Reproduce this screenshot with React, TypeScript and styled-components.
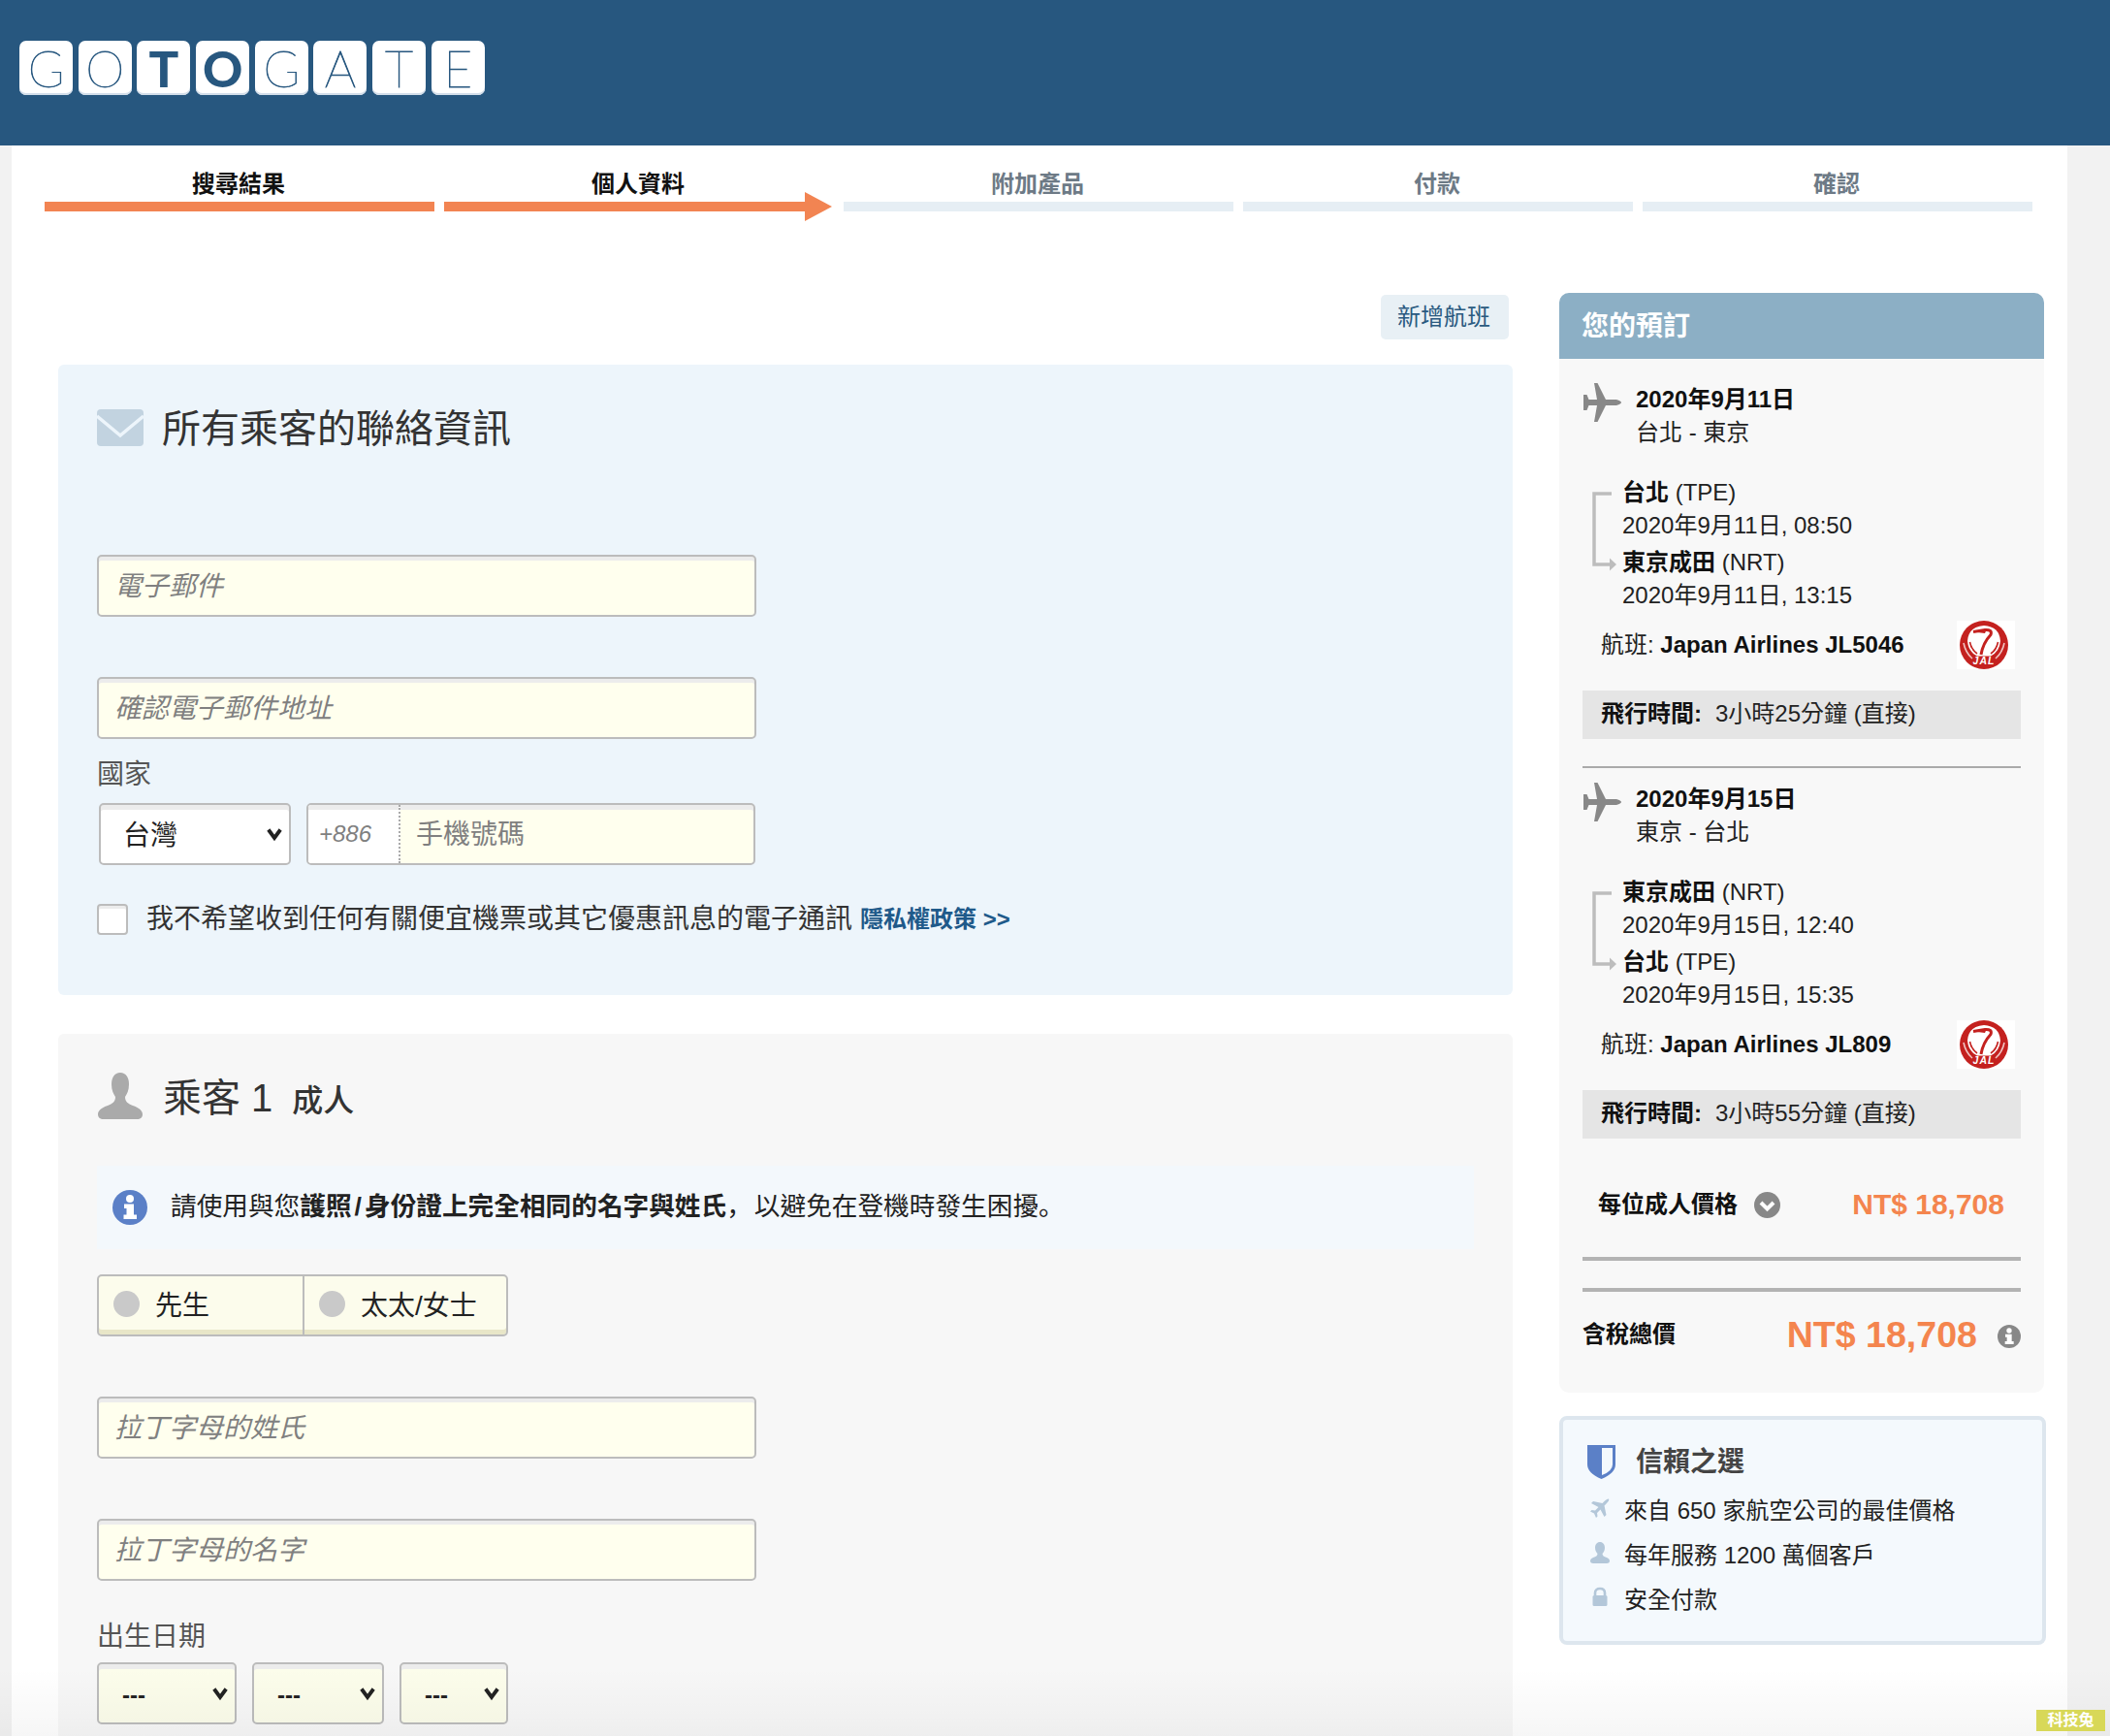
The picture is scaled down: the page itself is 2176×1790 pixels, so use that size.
import React from "react";
import styled, { createGlobalStyle } from "styled-components";

const Global = createGlobalStyle`
  html, body {
    margin: 0;
    padding: 0;
    background: #f2f2f2;
  }
  * {
    box-sizing: border-box;
  }
  body {
    font-family: "Liberation Sans", "Noto Sans CJK TC", sans-serif;
    color: #333;
  }
`;

const Page = styled.div`
  position: relative;
  width: 2176px;
  height: 1790px;
  overflow: hidden;
  background: #f2f2f2;
`;

const Header = styled.header`
  height: 150px;
  padding: 42px 0 0 20px;
  background: #27577f;
`;

const Logo = styled.div`
  display: flex;
  gap: 5.7px;
`;

const Tile = styled.span<{ $bold?: boolean }>`
  display: flex;
  align-items: center;
  justify-content: center;
  width: 55px;
  height: 56px;
  border-radius: 7px;
  background: #fff;
  box-shadow: inset 0 -2px 0 #d3deea;
  color: #27577f;
  font-family: Lato, sans-serif;
  font-size: 51px;
  line-height: 1;
  font-weight: ${(p) => (p.$bold ? 900 : 100)};
  -webkit-text-stroke: ${(p) => (p.$bold ? "0" : "0.8px #27577f")};
`;

const Sheet = styled.div`
  width: 2120px;
  height: 1640px;
  margin-left: 12px;
  background: #fff;
`;

const Steps = styled.nav`
  display: flex;
  gap: 10px;
  padding: 25px 0 0 34px;
`;

const Step = styled.div`
  display: flex;
  flex-direction: column;
  width: 402px;
`;

const StepLabel = styled.div<{ $done?: boolean }>`
  margin-bottom: 3px;
  padding-right: 2px;
  text-align: center;
  font-size: 24px;
  line-height: 30px;
  font-weight: 700;
  color: ${(p) => (p.$done ? "#111" : "#6d7a86")};
`;

const StepBar = styled.div<{ $done?: boolean; $current?: boolean }>`
  position: relative;
  width: ${(p) => (p.$current ? "372px" : "100%")};
  height: 10px;
  background: ${(p) => (p.$done ? "#f28452" : "#e6eef4")};
  ${(p) =>
    p.$current &&
    `
    &::after {
      content: "";
      position: absolute;
      left: 100%;
      top: -10px;
      border-left: 28px solid #f28452;
      border-top: 15px solid transparent;
      border-bottom: 15px solid transparent;
    }
  `}
`;

const Columns = styled.div`
  display: flex;
  gap: 48px;
  padding: 84px 0 0 48px;
`;

const Main = styled.main`
  width: 1500px;
  padding-top: 2px;
`;

const FlightBar = styled.div`
  display: flex;
  justify-content: flex-end;
  padding-right: 4px;
  margin-bottom: 26px;
`;

const AddFlight = styled.button`
  width: 132px;
  height: 46px;
  padding: 0 2px 6px 0;
  border: 0;
  border-radius: 5px;
  background: #e8f0f5;
  color: #2a5a80;
  font-family: inherit;
  font-size: 24px;
`;

const Panel = styled.section<{ $tint: string }>`
  padding: 45px 0 62px 40px;
  border-radius: 6px;
  background: ${(p) => p.$tint};
  & + & {
    margin-top: 40px;
    padding-top: 40px;
  }
`;

const TitleRow = styled.div`
  display: flex;
  align-items: center;
  gap: 19px;
  height: 40px;
`;

const Title = styled.h2`
  margin: 0;
  padding-top: 2px;
  font-size: 40px;
  line-height: 48px;
  font-weight: 400;
  color: #333;
`;

const Passenger = styled.div`
  display: flex;
  align-items: center;
  gap: 21px;
  height: 48px;
  padding-left: 1px;
`;

const PassengerTitle = styled(Title)`
  padding-top: 6px;
`;

const PassengerType = styled.span`
  margin-left: 20px;
  font-size: 32px;
  font-weight: 500;
`;

const Field = styled.input<{ $top?: number }>`
  display: block;
  width: 680px;
  height: 64px;
  margin-top: ${(p) => p.$top ?? 62}px;
  padding: 2px 16px 0;
  border: 2px solid #bcbcbc;
  border-radius: 5px;
  outline: 0;
  background: #ffffee;
  box-shadow: inset 0 4px 0 #ececec;
  font-family: inherit;
  font-size: 28px;
  &::placeholder {
    color: #808080;
    font-style: italic;
    opacity: 1;
  }
`;

const FieldLabel = styled.label<{ $top: number }>`
  display: block;
  margin-top: ${(p) => p.$top}px;
  font-size: 28px;
  line-height: 36px;
  color: #555;
`;

const PhoneRow = styled.div`
  display: flex;
  gap: 16px;
  margin: 11px 0 0 2px;
`;

const SelectWrap = styled.div<{ $width: number }>`
  position: relative;
  width: ${(p) => p.$width}px;
  height: 64px;
`;

const Select = styled.select<{ $tint?: string }>`
  width: 100%;
  height: 100%;
  padding: 2px 0 0 ${(p) => (p.$tint ? 24 : 23)}px;
  border: 2px solid #bcbcbc;
  border-radius: 5px;
  outline: 0;
  appearance: none;
  background: ${(p) => p.$tint ?? "#fff"};
  box-shadow: inset 0 5px 0 #ececec;
  color: #222;
  font-family: inherit;
  font-size: ${(p) => (p.$tint ? 24 : 28)}px;
  font-weight: ${(p) => (p.$tint ? 700 : 400)};
`;

const Caret = styled.svg`
  position: absolute;
  right: 8px;
  top: 23px;
  width: 18px;
  height: 18px;
  pointer-events: none;
`;

const Phone = styled.div`
  display: flex;
  width: 463px;
  height: 64px;
  border: 2px solid #bcbcbc;
  border-radius: 5px;
  overflow: hidden;
  background: #ffffee;
  box-shadow: inset 0 5px 0 #ececec;
`;

const Prefix = styled.span`
  display: flex;
  align-items: center;
  width: 95px;
  padding-left: 11px;
  border-right: 2px dotted #aaa;
  background: #fff;
  box-shadow: inset 0 5px 0 #ececec;
  color: #808080;
  font-size: 24px;
  font-style: italic;
`;

const PhoneInput = styled.input`
  flex: 1;
  min-width: 0;
  padding: 2px 16px 0;
  border: 0;
  outline: 0;
  background: transparent;
  font-family: inherit;
  font-size: 28px;
  &::placeholder {
    color: #808080;
    opacity: 1;
  }
`;

const OptOut = styled.div`
  display: flex;
  align-items: center;
  height: 32px;
  margin-top: 40px;
  font-size: 28px;
  line-height: 32px;
  color: #333;
`;

const CheckBox = styled.span`
  width: 32px;
  height: 32px;
  margin-right: 19px;
  border: 2px solid #bcbcbc;
  border-radius: 4px;
  background: #fff;
  box-shadow: inset 0 3px 0 #ececec;
`;

const Policy = styled.a`
  margin-left: 8px;
  color: #1f5a8a;
  font-size: 24px;
  font-weight: 700;
`;

const Notice = styled.div`
  display: flex;
  align-items: center;
  gap: 24px;
  width: 1420px;
  height: 86px;
  margin-top: 48px;
  padding-left: 16px;
  background: #f3f8fc;
  font-size: 26.67px;
  color: #222;
  b {
    font-weight: 700;
  }
`;

const NoticeText = styled.span`
  padding-bottom: 8px;
`;

const Slash = styled.span`
  padding: 0 3px;
`;

const Punct = styled.span`
  padding-right: 2px;
  font-family: "Noto Sans CJK SC", sans-serif;
`;

const RadioGroup = styled.div`
  display: flex;
  width: 424px;
  height: 64px;
  margin-top: 26px;
  border: 2px solid #bcbcbc;
  border-radius: 5px;
  overflow: hidden;
  background: #fcfcec;
  box-shadow: inset 0 -5px 0 #e8e6c8;
`;

const RadioOption = styled.label<{ $width: number }>`
  display: flex;
  align-items: center;
  gap: 16px;
  width: ${(p) => p.$width}px;
  padding: 0 0 4px 15px;
  font-size: 28px;
  color: #222;
  & + & {
    border-left: 2px solid #bcbcbc;
  }
`;

const RadioDot = styled.span`
  width: 27px;
  height: 27px;
  border-radius: 50%;
  background: #c9c9c9;
`;

const DateRow = styled.div`
  display: flex;
  gap: 16px;
  margin-top: 8px;
`;

const Aside = styled.aside`
  width: 502px;
`;

const Booking = styled.div`
  width: 500px;
  height: 1134px;
  border-radius: 10px;
  overflow: hidden;
  background: #f8f8f8;
`;

const BookingHead = styled.h3`
  height: 68px;
  margin: 0;
  padding-left: 23px;
  background: #8cafc5;
  color: #fff;
  font-size: 28px;
  line-height: 70px;
  font-weight: 700;
`;

const BookingBody = styled.div`
  padding: 10px 24px 0;
  font-size: 24px;
  line-height: 34px;
  color: #222;
  b {
    font-weight: 700;
    color: #111;
  }
`;

const LegHead = styled.div`
  display: flex;
  gap: 15px;
  margin: 15px 0 0 1px;
`;

const Stops = styled.div`
  position: relative;
  margin-top: 28px;
  padding-left: 41px;
`;

const StopName = styled.div`
  & ~ & {
    margin-top: 4px;
  }
`;

const Bracket = styled.svg`
  position: absolute;
  left: 9px;
  top: 16px;
  width: 28px;
  height: 84px;
`;

const FlightRow = styled.div`
  display: flex;
  align-items: center;
  justify-content: space-between;
  height: 50px;
  margin-top: 9px;
  padding: 0 6px 0 19px;
`;

const Duration = styled.div`
  display: flex;
  align-items: center;
  gap: 14px;
  height: 50px;
  margin-top: 22px;
  padding: 0 0 2px 19px;
  background: #e5e5e5;
`;

const LegRule = styled.hr`
  height: 2px;
  margin: 28px 0 0;
  border: 0;
  background: #aaa;
`;

const PriceRow = styled.div`
  display: flex;
  align-items: center;
  height: 40px;
  margin-top: 48px;
  padding: 0 17px 0 16px;
`;

const PriceLabel = styled.b`
  margin-right: 17px;
`;

const Amount = styled.span<{ $large?: boolean }>`
  margin-left: auto;
  color: #f4854e;
  font-size: ${(p) => (p.$large ? 37.6 : 30)}px;
  font-weight: 700;
`;

const Rule = styled.hr<{ $top: number }>`
  height: 4px;
  margin: ${(p) => p.$top}px 0 0;
  border: 0;
  background: #b3b3b3;
`;

const TotalRow = styled.div`
  display: flex;
  align-items: center;
  gap: 21px;
  height: 50px;
  margin-top: 19px;
  svg {
    margin-top: 4px;
  }
`;

const Trust = styled.div`
  height: 236px;
  margin-top: 24px;
  padding: 26px 0 0 25px;
  border: 4px solid #dde6ee;
  border-radius: 8px;
  background: #f4f9fd;
`;

const TrustHead = styled.div`
  display: flex;
  align-items: center;
  gap: 21px;
  height: 35px;
  margin-bottom: 7px;
`;

const TrustTitle = styled.div`
  padding-bottom: 5px;
  font-size: 28px;
  font-weight: 700;
  color: #444;
`;

const TrustRow = styled.div`
  display: flex;
  align-items: center;
  height: 46px;
  padding-left: 3px;
  font-size: 24px;
  color: #222;
`;

const TrustIcon = styled.svg`
  flex: none;
  width: 20px;
  height: 22px;
  margin-right: 15px;
`;

const Shade = styled.div`
  position: absolute;
  left: 0;
  right: 0;
  bottom: 0;
  height: 70px;
  background: linear-gradient(rgba(0, 0, 0, 0), rgba(0, 0, 0, 0.035));
  pointer-events: none;
`;

const Watermark = styled.div`
  position: absolute;
  right: 5px;
  bottom: 5px;
  width: 71px;
  height: 22px;
  background: #d8d858;
  color: #fff;
  font-size: 16px;
  line-height: 22px;
  font-weight: 700;
  text-align: center;
`;

function CaretIcon() {
  return (
    <Caret viewBox="0 0 16 16">
      <path d="M2.5 4 L8 11.5 L13.5 4" fill="none" stroke="#222" strokeWidth="3.4" />
    </Caret>
  );
}

function Dropdown({ width, value, tint }: { width: number; value: string; tint?: string }) {
  return (
    <SelectWrap $width={width}>
      <Select $tint={tint} defaultValue={value}>
        <option>{value}</option>
      </Select>
      <CaretIcon />
    </SelectWrap>
  );
}

function PlaneIcon() {
  return (
    <svg width="39" height="40" viewBox="0 0 39 40" style={{ flex: "none" }}>
      <path
        d="M0 12 L3.5 12 L5.5 17 L14 17 L11 0 L14.5 0 L23 17 L34 17 Q39 18.5 39 20 Q39 21.5 34 23 L23 23 L14.5 40 L11 40 L14 23 L5.5 23 L3.5 28 L0 28 Z"
        fill="#888"
      />
    </svg>
  );
}

function JalLogo() {
  return (
    <svg width="60" height="50" viewBox="0 0 60 50" style={{ background: "#fff" }}>
      <ellipse cx="28" cy="25" rx="25" ry="25" fill="#c4211f" />
      <path d="M11 21 Q12 6 28 5 Q44 6 45 21 Q44 32 35 36.5 L21 36.5 Q12 32 11 21 Z" fill="#fff" />
      <path d="M17 11.5 L29 9.5 Q37 9 35 14.5 Q27 23 25 35" fill="none" stroke="#c4211f" strokeWidth="3" />
      <path d="M17 11.5 L29 13 L31 8.5 Z" fill="#c4211f" />
      <path d="M13.5 22 Q15 30 21 34 M42.5 22 Q41 30 35 34" fill="none" stroke="#c4211f" strokeWidth="1.6" />
      <path d="M7 23 Q9 33 16 39 M49 23 Q47 33 40 39" fill="none" stroke="#f0c4c2" strokeWidth="1.6" />
      <text x="28" y="45" textAnchor="middle" fontSize="10.5" fontWeight="700" fontStyle="italic" fill="#fff" fontFamily="Liberation Sans" letterSpacing="1">
        JAL
      </text>
    </svg>
  );
}

function CircleInfo({ size, color }: { size: number; color: string }) {
  return (
    <svg width={size} height={size} viewBox="0 0 36 36" style={{ flex: "none" }}>
      <circle cx="18" cy="18" r="18" fill={color} />
      <circle cx="18" cy="9" r="4" fill="#fff" />
      <path d="M12 14.5 H22 V25.5 H25 V30 H11.5 V25.5 H14.5 V19 H12 Z" fill="#fff" />
    </svg>
  );
}

function Leg({ date, route, from, fromTime, to, toTime, flight, duration }: {
  date: string;
  route: string;
  from: [string, string];
  fromTime: string;
  to: [string, string];
  toTime: string;
  flight: string;
  duration: string;
}) {
  return (
    <>
      <LegHead>
        <PlaneIcon />
        <div>
          <b>{date}</b>
          <div>{route}</div>
        </div>
      </LegHead>
      <Stops>
        <Bracket viewBox="0 0 28 84">
          <path d="M21 2 H3 V75 H20" fill="none" stroke="#bdbdbd" strokeWidth="3.5" />
          <path d="M19 68.5 L26 75 L19 81.5 Z" fill="#bdbdbd" />
        </Bracket>
        <StopName>
          <b>{from[0]}</b> ({from[1]})
          <div>{fromTime}</div>
        </StopName>
        <StopName>
          <b>{to[0]}</b> ({to[1]})
          <div>{toTime}</div>
        </StopName>
      </Stops>
      <FlightRow>
        <span>
          航班: <b>{flight}</b>
        </span>
        <JalLogo />
      </FlightRow>
      <Duration>
        <b>飛行時間:</b>
        <span>{duration}</span>
      </Duration>
    </>
  );
}

export default function App() {
  const stepNames = ["搜尋結果", "個人資料", "附加產品", "付款", "確認"];
  return (
    <Page>
      <Global />
      <Header>
        <Logo>
          <Tile>G</Tile>
          <Tile>O</Tile>
          <Tile $bold>T</Tile>
          <Tile $bold>O</Tile>
          <Tile>G</Tile>
          <Tile>A</Tile>
          <Tile>T</Tile>
          <Tile>E</Tile>
        </Logo>
      </Header>
      <Sheet>
        <Steps>
          {stepNames.map((name, i) => (
            <Step key={name}>
              <StepLabel $done={i < 2}>{name}</StepLabel>
              <StepBar $done={i < 2} $current={i === 1} />
            </Step>
          ))}
        </Steps>
        <Columns>
          <Main>
            <FlightBar>
              <AddFlight>新增航班</AddFlight>
            </FlightBar>
            <Panel $tint="#edf5fb">
              <TitleRow>
                <svg width="48" height="38" viewBox="0 0 48 38">
                  <rect width="48" height="38" rx="4" fill="#c2d3e0" />
                  <path d="M0 7 L24 27 L48 7" fill="none" stroke="#edf5fb" strokeWidth="3.5" />
                </svg>
                <Title>所有乘客的聯絡資訊</Title>
              </TitleRow>
              <Field $top={111} placeholder="電子郵件" />
              <Field placeholder="確認電子郵件地址" />
              <FieldLabel $top={19}>國家</FieldLabel>
              <PhoneRow>
                <Dropdown width={198} value="台灣" />
                <Phone>
                  <Prefix>+886</Prefix>
                  <PhoneInput placeholder="手機號碼" />
                </Phone>
              </PhoneRow>
              <OptOut>
                <CheckBox />
                我不希望收到任何有關便宜機票或其它優惠訊息的電子通訊
                <Policy>隱私權政策 &gt;&gt;</Policy>
              </OptOut>
            </Panel>
            <Panel $tint="#f7f7f7">
              <Passenger>
                <svg width="46" height="48" viewBox="0 0 46 48" style={{ flex: "none" }}>
                  <path
                    d="M23 0 C29 0 32 5 32 12 C32 18 30 22 28 25 C28 30 31 32 36 34 C42 36 46 39 46 43 C46 46 44 48 40 48 H6 C2 48 0 46 0 43 C0 39 4 36 10 34 C15 32 18 30 18 25 C16 22 14 18 14 12 C14 5 17 0 23 0 Z"
                    fill="#aaa"
                  />
                </svg>
                <PassengerTitle>
                  乘客 1<PassengerType>成人</PassengerType>
                </PassengerTitle>
              </Passenger>
              <Notice>
                <CircleInfo size={36} color="#5b80c7" />
                <NoticeText>
                  請使用與您
                  <b>
                    護照<Slash>/</Slash>身份證上完全相同的名字與姓氏
                  </b>
                  <Punct>，</Punct>以避免在登機時發生困擾<Punct>。</Punct>
                </NoticeText>
              </Notice>
              <RadioGroup>
                <RadioOption $width={210}>
                  <RadioDot />
                  先生
                </RadioOption>
                <RadioOption $width={210}>
                  <RadioDot />
                  太太/女士
                </RadioOption>
              </RadioGroup>
              <Field placeholder="拉丁字母的姓氏" />
              <Field placeholder="拉丁字母的名字" />
              <FieldLabel $top={40}>出生日期</FieldLabel>
              <DateRow>
                <Dropdown width={144} value="---" tint="#fcfdeb" />
                <Dropdown width={136} value="---" tint="#fcfdeb" />
                <Dropdown width={112} value="---" tint="#fcfdeb" />
              </DateRow>
            </Panel>
          </Main>
          <Aside>
            <Booking>
              <BookingHead>您的預訂</BookingHead>
              <BookingBody>
                <Leg
                  date="2020年9月11日"
                  route="台北 - 東京"
                  from={["台北", "TPE"]}
                  fromTime="2020年9月11日, 08:50"
                  to={["東京成田", "NRT"]}
                  toTime="2020年9月11日, 13:15"
                  flight="Japan Airlines JL5046"
                  duration="3小時25分鐘 (直接)"
                />
                <LegRule />
                <Leg
                  date="2020年9月15日"
                  route="東京 - 台北"
                  from={["東京成田", "NRT"]}
                  fromTime="2020年9月15日, 12:40"
                  to={["台北", "TPE"]}
                  toTime="2020年9月15日, 15:35"
                  flight="Japan Airlines JL809"
                  duration="3小時55分鐘 (直接)"
                />
                <PriceRow>
                  <PriceLabel>每位成人價格</PriceLabel>
                  <svg width="27" height="27" viewBox="0 0 27 27">
                    <circle cx="13.5" cy="13.5" r="13.5" fill="#888" />
                    <path d="M7 11 L13.5 17.5 L20 11" fill="none" stroke="#fff" strokeWidth="4" />
                  </svg>
                  <Amount>NT$ 18,708</Amount>
                </PriceRow>
                <Rule $top={34} />
                <Rule $top={28} />
                <TotalRow>
                  <b>含稅總價</b>
                  <Amount $large>NT$ 18,708</Amount>
                  <CircleInfo size={24} color="#888" />
                </TotalRow>
              </BookingBody>
            </Booking>
            <Trust>
              <TrustHead>
                <svg width="29" height="35" viewBox="0 0 29 35">
                  <path d="M0 0 H29 V20 Q29 29 14.5 35 Q0 29 0 20 Z" fill="#5b80c7" />
                  <path d="M15 3 H26 V20 Q26 27 15 31 Z" fill="#f4f9fd" />
                </svg>
                <TrustTitle>信賴之選</TrustTitle>
              </TrustHead>
              <TrustRow>
                <TrustIcon viewBox="0 0 20 22">
                  <path
                    d="M19 1.5 Q20 3 17 6 L14.5 8.5 L16.5 18 L14.5 20 L10.5 12.5 L7 16 L7.5 19.5 L6 21 L4 16.5 L0 14.5 L1.5 13 L5 13.5 L8.5 10 L1 6 L3 4 L12.5 6 L15 3.5 Q18 1 19 1.5 Z"
                    fill="#b3c7d9"
                  />
                </TrustIcon>
                來自 650 家航空公司的最佳價格
              </TrustRow>
              <TrustRow>
                <TrustIcon viewBox="0 0 20 22">
                  <path
                    d="M10 0 C13 0 15 2.5 15 6 C15 9 13.5 11 12.5 12 C12.5 14 14 15 17 16 C19 17 20 18 20 19.5 C20 21 19 22 17 22 H3 C1 22 0 21 0 19.5 C0 18 1 17 3 16 C6 15 7.5 14 7.5 12 C6.5 11 5 9 5 6 C5 2.5 7 0 10 0 Z"
                    fill="#b3c7d9"
                  />
                </TrustIcon>
                每年服務 1200 萬個客戶
              </TrustRow>
              <TrustRow>
                <TrustIcon viewBox="0 0 20 22">
                  <path d="M5 9 V6.5 C5 3.5 7 2 10 2 C13 2 15 3.5 15 6.5 V9" fill="none" stroke="#b3c7d9" strokeWidth="2.6" />
                  <rect x="2.5" y="9" width="15" height="11" rx="1.5" fill="#b3c7d9" />
                </TrustIcon>
                安全付款
              </TrustRow>
            </Trust>
          </Aside>
        </Columns>
      </Sheet>
      <Shade />
      <Watermark>科技兔</Watermark>
    </Page>
  );
}
